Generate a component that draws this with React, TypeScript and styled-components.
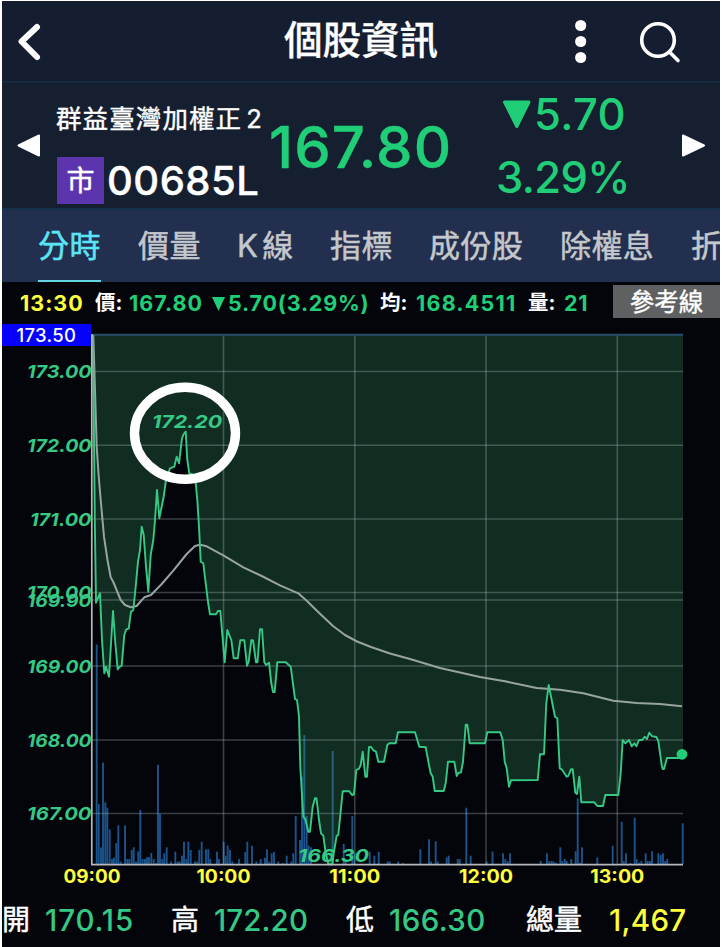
import React from "react";
import styled, { createGlobalStyle } from "styled-components";

const GREEN = "#21ce78";
const LINE = "#35c985";
const YELLOW = "#ffff3c";

const GlobalStyle = createGlobalStyle`
  * { box-sizing: border-box; }
  body { margin: 0; background: #fff; }
`;

const Screen = styled.main`
  width: 718px;
  height: 946px;
  margin: 1px 0 0 2px;
  display: flex;
  flex-direction: column;
  overflow: hidden;
  background: #04050b;
  color: #fff;
  font-family: Inter, "Noto Sans CJK TC", sans-serif;
  white-space: nowrap;
`;

const Header = styled.header`
  height: 82px;
  flex: none;
  display: grid;
  grid-template-columns: 282px 274px 46px 116px;
  align-items: start;
  background: #151d30;
  border-bottom: 2px solid #152b40;
`;

const BackIcon = styled.svg`
  width: 30px;
  height: 44px;
  margin: 19px 0 0 13px;
`;

const Title = styled.h1`
  margin: 11px 0 0;
  font-size: 38.5px;
  line-height: 56px;
  font-weight: 500;
  -webkit-text-stroke: 0.3px currentColor;
`;

const DotsIcon = styled.svg`
  width: 46px;
  height: 60px;
  margin-top: 11px;
`;

const SearchIcon = styled.svg`
  width: 50px;
  height: 50px;
  margin: 15px 0 0 29px;
`;

const Quote = styled.section`
  height: 127px;
  flex: none;
  display: grid;
  grid-template-columns: 54px 213px 216px 190px 45px;
  background: #151f30;
  border-bottom: 2px solid #15304a;
`;

const Arrow = styled.svg<{ $indent: number }>`
  width: 24px;
  height: 24px;
  margin: 50px 0 0 ${(p) => p.$indent}px;
`;

const Names = styled.div`
  display: flex;
  flex-direction: column;
`;

const StockName = styled.div`
  display: flex;
  gap: 4px;
  height: 36px;
  margin-top: 18px;
  font-size: 25.5px;
  line-height: 36px;
  letter-spacing: 1.1px;
  -webkit-text-stroke: 0.4px currentColor;
`;

const CodeRow = styled.div`
  display: flex;
  align-items: center;
  gap: 3px;
  margin-top: 20px;
  height: 47px;
`;

const MarketBadge = styled.span`
  width: 47px;
  height: 47px;
  margin-left: 1px;
  display: grid;
  place-items: center;
  background: #5c35ae;
  font-size: 28px;
  line-height: 40px;
  -webkit-text-stroke: 0.5px currentColor;
`;

const Code = styled.span`
  font-size: 40px;
  font-weight: 500;
  line-height: 49px;
  letter-spacing: 0.5px;
  -webkit-text-stroke: 0.4px currentColor;
`;

const Price = styled.div`
  margin-top: 34px;
  color: ${GREEN};
  font-size: 58px;
  line-height: 60px;
  font-weight: 500;
  letter-spacing: 1.1px;
  -webkit-text-stroke: 0.4px currentColor;
`;

const Changes = styled.div`
  display: flex;
  flex-direction: column;
  gap: 11px;
  margin-top: 5px;
  color: ${GREEN};
  font-size: 43.5px;
  line-height: 52px;
  font-weight: 500;
`;

const ChangeLine = styled.div<{ $indent: number; $spacing: number }>`
  display: flex;
  height: 52px;
  padding-left: ${(p) => p.$indent}px;
  letter-spacing: ${(p) => p.$spacing}px;
`;

const DownIcon = styled.svg`
  width: 30px;
  height: 30px;
  margin: 11px 2px 0 0;
`;

const Tabs = styled.nav`
  height: 72px;
  flex: none;
  display: grid;
  grid-template-columns: 100px 99px 93px 99px 131px 131px 65px;
  padding-left: 36px;
  background: #232f4e;
  overflow: hidden;
`;

const Tab = styled.div<{ $active?: boolean }>`
  justify-self: start;
  height: 72px;
  font-size: 31px;
  line-height: 71px;
  letter-spacing: 0.4px;
  word-spacing: -5px;
  -webkit-text-stroke: 0.5px currentColor;
  border-bottom: ${(p) => (p.$active ? "2px solid #62d5e3" : "0")};
  color: ${(p) => (p.$active ? "#5de4f5" : "#c4c8cc")};
`;

const InfoBar = styled.div`
  height: 38px;
  flex: none;
  display: grid;
  grid-template-columns: 75px 34px 83px 168px 36px 112px 36px 49px 107px;
  padding-left: 18px;
  align-items: start;
`;

const InfoText = styled.span<{ $color: string; $spacing?: number }>`
  color: ${(p) => p.$color};
  font-size: 21.5px;
  line-height: 42px;
  font-weight: 700;
  letter-spacing: ${(p) => p.$spacing ?? 0}px;
`;

const InfoLabel = styled.span`
  font-size: 20.5px;
  line-height: 42px;
  font-weight: 700;
`;

const SmallDown = styled.svg`
  width: 13px;
  height: 15px;
  margin-right: 3px;
`;

const Reference = styled.button`
  height: 33px;
  margin-top: 3px;
  padding: 0;
  border: 0;
  background: #5f6062;
  color: #fff;
  font: 400 24.5px/32px Inter, "Noto Sans CJK TC", sans-serif;
  -webkit-text-stroke: 0.4px currentColor;
`;

const Chart = styled.svg`
  width: 718px;
  height: 573px;
  flex: none;
  display: block;
`;

const Footer = styled.footer`
  height: 54px;
  flex: none;
  display: grid;
  grid-template-columns: 43px 126px 43px 132px 43px 137px 83px 109px;
`;

const FootLabel = styled.span`
  font-size: 28px;
  line-height: 54px;
  -webkit-text-stroke: 0.5px currentColor;
`;

const FootValue = styled.span<{ $color: string; $spacing: number }>`
  color: ${(p) => p.$color};
  font-size: 29.5px;
  line-height: 54px;
  font-weight: 500;
  letter-spacing: ${(p) => p.$spacing}px;
`;

const PRICE =
  "93,335 94.8,520 96,602.7 100,593.3 102,640 104.3,673.3 106,666.7 109,676.7 113,611 115.3,643 117.7,669.3 119.5,667 121.7,665.7 124.3,635 126.3,629.3 128.7,628.7 131,611.7 133.3,610 135.7,586.7 138,561.7 140,550 141.7,526.7 143.7,535 146,566.7 148.3,591.7 150.7,555 153.3,540 155,520 157,490 159.3,518.3 163.7,496.7 166,480 170,468.3 174.3,466.7 176.7,456.7 179,463.3 182,438.3 183.7,434 185.7,431.7 187.3,460 189.3,473.3 195,475 197.3,500 199,526.7 200.7,561.7 203.3,563.3 205.3,580 208,602 210,614.3 216,614.3 218,611 220.3,611 224.7,662.3 227.3,630 231.3,640 233.7,658.3 237.7,658.3 240.3,640.3 244.3,640.3 247,665.7 248.7,661.7 251.3,640.3 253,640.3 256,662.3 257.5,662.3 260,629.3 262,629.3 264.3,662.3 266,665 269,662.7 271.3,683.3 273,692 274.7,692 277.3,662.3 285.7,662.3 290.7,666.7 295,699 297,700 299,716.7 300.3,766.7 303.3,816.7 305.3,819.3 308.3,831.7 310,831.7 312.7,806.7 315,798.3 316.5,798.3 319,820 321,833.3 323.3,835.7 325.7,853 328.3,864.3 332.3,864.3 333.7,853.3 336.7,835.7 338.3,835 342.7,791.3 349.3,791.3 352,795 354,794.3 356.3,770 359,768.7 360.7,765 362.7,751.7 365.3,776.7 367,776.7 369,747 371,747 373.3,750.3 376,751.7 378.3,761.7 384,761.7 387.3,745 389.3,743.3 395.7,743.3 398,732.3 415,732.3 419.3,746.7 425.7,747.3 429,765 430.7,773.3 432.7,776.7 434.7,791 443.7,791 445.7,783.3 448,761.7 454.3,761.7 456.7,776 458.3,773 461,772.3 463,761.7 465.7,724.7 467.3,724.7 469.7,743.3 485,743.3 487.3,732.3 500.3,732.3 502.7,740 504.7,761.7 506.7,768.3 509,786.7 511,780.3 537.7,780 540,754.3 544,754.3 546.3,703.3 548.7,685 555,716.7 557.3,718.3 559.7,768.3 561.7,769.3 566.7,776.7 568.3,776 571,769.3 572.7,769.3 575.3,792.7 577,794 579.3,776.7 581.3,802.3 594.3,802.3 597.3,806 603,806 605.3,795 618.3,795 620.7,773.3 622.7,740 625.3,743.3 629,740 631.7,746.3 634.3,743.3 636.3,746.3 639,740 642.3,740 644.7,736.7 647,739 649.3,732.7 652,736.3 656.3,737 658.3,741 661.7,765 662.7,769 664,769 667,758 682,758";

const AVERAGE =
  "93.3,335 95,390 96.7,446.7 98.6,475 100.7,500 104,536.7 107.5,560 110.7,577.3 113.3,582 117,591 120.7,600 125,605 130.7,607.3 136.7,606 140.5,601.5 144.3,597.3 151,595 161.7,584 173.3,570.7 186.7,554 195,546 200,544.7 206.7,546.3 223.3,555.3 243.3,567.3 261.7,576 280,585.3 298.3,593.3 306.7,600.7 320,613.7 333,626 345,635 357,641.5 371,647 390,653.5 410,659 440,668 480,677 505,681.3 536.7,688 560,689.7 583.3,693.3 613.3,700.7 636.7,703 660,704 682,706.3";

const VOLUME: [number, number][] = [
  [96.7, 644.5], [98.7, 804], [101, 847.5], [103, 762.7], [105.3, 802.3], [107.3, 807.7], [109.7, 829.5], [112, 859], [114, 857.5],
  [116.3, 843], [118.3, 825.3], [120.7, 861.5], [125, 825.3], [127.3, 859], [129.3, 859], [131.7, 850], [133.7, 847.3], [136, 861.5],
  [138.3, 851.5], [140.3, 810], [142.7, 859], [145, 859], [147, 857.3], [149, 857.3], [151.3, 853], [153.7, 859], [155.7, 863],
  [158, 764.7], [160, 814], [162.3, 859], [164.3, 853.3], [166.7, 847.3], [171, 861.5], [175.3, 851.7], [177.7, 861.5], [179.7, 861.5],
  [182, 855.7], [184, 841.7], [186.3, 859], [188.3, 841.7], [190.7, 850], [195, 861.5], [197.3, 861.5], [199.3, 850], [201.7, 841.7],
  [206, 849.3], [208.3, 849.3], [210.3, 859], [217, 851.7], [219, 859], [223.7, 841.7], [225.7, 855.7], [227.7, 845.7], [230, 850],
  [232.3, 861.5], [239, 859], [245.3, 852], [247.3, 841.7], [252, 845.7], [256.3, 861.5], [260.7, 859], [265, 857.7], [267, 849.3],
  [269.3, 861.5], [271.7, 853.3], [274, 852], [278.3, 861.5], [282.7, 863], [286.7, 855.7], [291.3, 861.5], [293.3, 853.3],
  [295.7, 816], [300, 840], [302, 776.7], [304.3, 735], [306.7, 816], [308.7, 845.7], [311, 847.3], [332.7, 751], [343.7, 844],
  [345.7, 859], [352.3, 816], [354.3, 853], [369.7, 851.7], [374.3, 855.7], [378.7, 851.7], [387.7, 861.5], [389.7, 861.5],
  [398.3, 861.5], [403, 863], [420.3, 849.3], [429, 839.3], [431, 861.5], [435.7, 841.3], [437.7, 861.5], [446.7, 857.3],
  [448.7, 855.7], [457.7, 859], [459.7, 859], [466.3, 807.7], [470.7, 855.7], [486.7, 861.5], [492.5, 851.5], [503, 853.3],
  [505.3, 859], [507.7, 861], [510, 853.3], [540.7, 861], [547, 853.3], [549.3, 861], [551.7, 861], [553.7, 861.7], [556, 862.7],
  [560.3, 847.3], [562.3, 861], [564.7, 859], [566.7, 861], [571.3, 859], [575.7, 851.3], [577.7, 798.3], [580, 862.7], [582, 847.3],
  [597.3, 857.3], [612.7, 845.7], [621.7, 821.7], [623.7, 861], [626, 853.3], [630.3, 863], [634.7, 817.7], [636.7, 859],
  [639, 862.7], [641.3, 861], [645.7, 853.3], [647.7, 861], [650, 861], [652, 851.3], [658.3, 853.3], [660.7, 855], [663, 853.3],
  [665.3, 861], [667.3, 859], [682.7, 823.3],
];

const LEVELS: [string, number][] = [
  ["173.00", 371.5], ["172.00", 445.3], ["171.00", 519], ["170.00", 592.5], ["169.90", 600], ["169.00", 666], ["168.00", 740], ["167.00", 813.5],
];

const HOURS: [string, number][] = [
  ["09:00", 92], ["10:00", 223.5], ["11:00", 354.8], ["12:00", 486], ["13:00", 617.3],
];

const TABS = ["分時", "價量", "K 線", "指標", "成份股", "除權息", "折溢價"];

function IntradayChart() {
  return (
    <Chart viewBox="2 320 718 573" fontFamily="Inter, sans-serif">
      {VOLUME.map(([x, y]) => (
        <rect key={x} x={x - 0.95} y={y} width={1.9} height={864 - y} fill="#1b538c" />
      ))}
      <polygon points={`${PRICE} 683,758 683,335`} fill="rgba(50,140,90,.3)" />
      <g stroke="#a5b5b5" strokeOpacity={0.33} strokeWidth={1.6}>
        {LEVELS.map(([label, y]) => (
          <line key={label} x1={92} x2={683} y1={y} y2={y} />
        ))}
        {HOURS.slice(1).map(([label, x]) => (
          <line key={label} x1={x} x2={x} y1={335} y2={864} />
        ))}
      </g>
      <line x1={92} x2={683} y1={334.8} y2={334.8} stroke="#264f6c" strokeWidth={2} />
      <polyline points={AVERAGE} fill="none" stroke="#98a49e" strokeWidth={2} strokeLinejoin="round" />
      <polyline points={PRICE} fill="none" stroke={LINE} strokeWidth={1.9} strokeLinejoin="round" />
      <path d="M91.8 334V864.7H683" fill="none" stroke="#b5b7ba" strokeWidth={1.7} />
      <circle cx={682} cy={754.3} r={5.4} fill={GREEN} />
      <rect x={2} y={324} width={89} height={22} fill="#0400fb" />
      <text x={16.5} y={341.7} fontSize={18.5} fontWeight={500} fill="#fff" textLength={59.5}>173.50</text>
      <g fontSize={18} fontWeight={700} fontStyle="italic" fill={LINE}>
        {LEVELS.map(([label, y]) => (
          <text
            key={label}
            x={label === "171.00" ? 30 : 27}
            y={y + 6.6}
            textLength={label === "171.00" ? 61.5 : 64.5}
            lengthAdjust="spacingAndGlyphs"
          >
            {label}
          </text>
        ))}
        <text x={152} y={428.3} textLength={70} lengthAdjust="spacingAndGlyphs">172.20</text>
        <text x={298} y={862.4} textLength={71} lengthAdjust="spacingAndGlyphs">166.30</text>
      </g>
      <g fontSize={18.5} fontWeight={700} fill={YELLOW}>
        {HOURS.map(([label, x]) => {
          const width = label === "11:00" ? 51 : label === "09:00" ? 57 : 54;
          return (
            <text key={label} x={x - width / 2} y={882.6} textLength={width} lengthAdjust="spacingAndGlyphs">{label}</text>
          );
        })}
      </g>
      <ellipse cx={185} cy={433.3} rx={50.5} ry={46} fill="none" stroke="#fff" strokeWidth={9.4} />
    </Chart>
  );
}

export default function App() {
  return (
    <>
      <GlobalStyle />
      <Screen>
        <Header>
          <BackIcon viewBox="0 0 30 44" fill="none" stroke="#fff" strokeWidth={6} strokeLinecap="round" strokeLinejoin="round">
            <path d="M22 7 6.6 21.5 22 37" />
          </BackIcon>
          <Title>個股資訊</Title>
          <DotsIcon viewBox="0 0 46 60" fill="#fff">
            <circle cx="22.7" cy="13.5" r="5.6" />
            <circle cx="22.7" cy="29.5" r="5.6" />
            <circle cx="22.7" cy="45.5" r="5.6" />
          </DotsIcon>
          <SearchIcon viewBox="0 0 50 50" fill="none" stroke="#fff" strokeWidth={3.6} strokeLinecap="round">
            <circle cx="25" cy="24" r="16.3" />
            <path d="m37 36.5 8 8" />
          </SearchIcon>
        </Header>
        <Quote>
          <Arrow $indent={14} viewBox="0 0 24 24" fill="#fff" stroke="#fff" strokeWidth={2} strokeLinejoin="round">
            <path d="M23 2.5v20L2.5 12.5Z" />
          </Arrow>
          <Names>
            <StockName>群益臺灣加權正<span>2</span></StockName>
            <CodeRow>
              <MarketBadge>市</MarketBadge>
              <Code>00685L</Code>
            </CodeRow>
          </Names>
          <Price>167.80</Price>
          <Changes>
            <ChangeLine $indent={17} $spacing={0.4}>
              <DownIcon viewBox="0 0 30 30" fill={GREEN} stroke={GREEN} strokeWidth={3} strokeLinejoin="round">
                <path d="M2.5 3h24.5L14.8 27.5Z" />
              </DownIcon>
              5.70
            </ChangeLine>
            <ChangeLine $indent={11} $spacing={-0.6}>3.29%</ChangeLine>
          </Changes>
          <Arrow $indent={6} viewBox="0 0 24 24" fill="#fff" stroke="#fff" strokeWidth={2} strokeLinejoin="round">
            <path d="M2 2.5v20L23 12.5Z" />
          </Arrow>
        </Quote>
        <Tabs>
          {TABS.map((label, i) => (
            <Tab key={label} $active={i === 0}>{label}</Tab>
          ))}
        </Tabs>
        <InfoBar>
          <InfoText $color={YELLOW} $spacing={1}>13:30</InfoText>
          <InfoLabel>價:</InfoLabel>
          <InfoText $color={GREEN} $spacing={1}>167.80</InfoText>
          <InfoText $color={GREEN} $spacing={0.8}>
            <SmallDown viewBox="0 0 13 15"><path d="M0 1h13L6.5 15Z" fill={GREEN} /></SmallDown>
            5.70(3.29%)
          </InfoText>
          <InfoLabel>均:</InfoLabel>
          <InfoText $color={GREEN} $spacing={1.2}>168.4511</InfoText>
          <InfoLabel>量:</InfoLabel>
          <InfoText $color={GREEN} $spacing={0.6}>21</InfoText>
          <Reference>參考線</Reference>
        </InfoBar>
        <IntradayChart />
        <Footer>
          <FootLabel>開</FootLabel>
          <FootValue $color={LINE} $spacing={0.9}>170.15</FootValue>
          <FootLabel>高</FootLabel>
          <FootValue $color={LINE} $spacing={0.1}>172.20</FootValue>
          <FootLabel>低</FootLabel>
          <FootValue $color={LINE} $spacing={0.4}>166.30</FootValue>
          <FootLabel>總量</FootLabel>
          <FootValue $color={YELLOW} $spacing={0.3}>1,467</FootValue>
        </Footer>
      </Screen>
    </>
  );
}
